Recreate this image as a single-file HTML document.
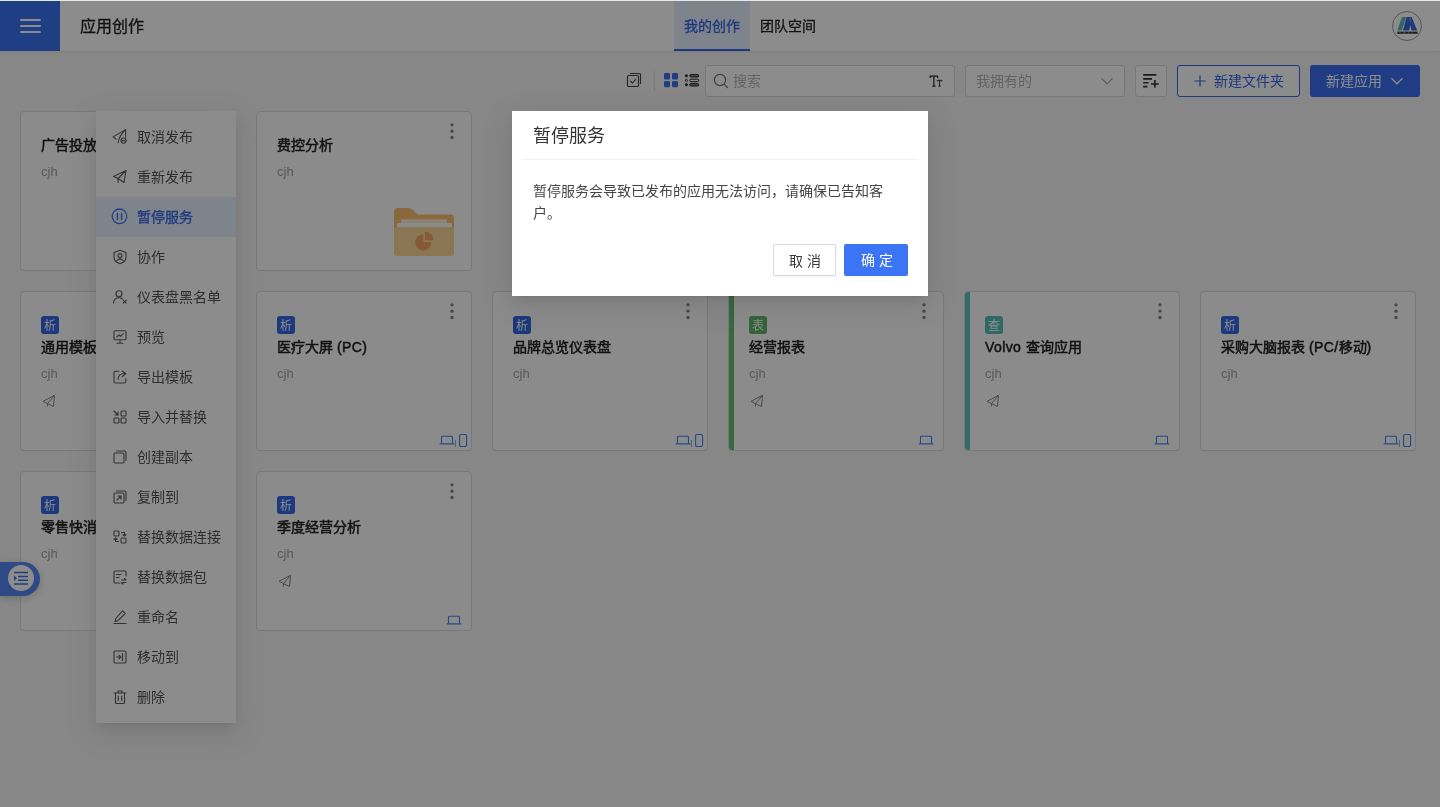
<!DOCTYPE html>
<html lang="zh-CN"><head><meta charset="utf-8">
<style>
*{box-sizing:border-box;margin:0;padding:0}
html,body{width:1440px;height:807px;overflow:hidden}
body{position:relative;background:#f6f6f7;font-family:"Liberation Sans",sans-serif;color:#1f1f1f}
#root{position:absolute;left:0;top:0;width:1440px;height:807px;will-change:transform}
.a{position:absolute}
svg{overflow:visible}
#hdr{left:0;top:0;width:1440px;height:51px;background:#fff;box-shadow:0 1px 3px rgba(0,0,0,.08)}
#ham{left:0;top:1px;width:60px;height:50px;background:#3b72f0}
#ham i{position:absolute;left:20px;width:21px;height:2px;background:#fff;border-radius:1px}
.ttl{left:80px;top:15px;font-size:16px;line-height:24px;font-weight:500;-webkit-text-stroke:0.3px #1f1f1f;color:#1f1f1f}
.tab{top:1px;height:50px;font-size:14px;line-height:50px;font-weight:500;-webkit-text-stroke:0.3px currentColor;text-align:center}
#tab1{left:674px;width:76px;background:#e8effd;color:#3467e6}
#tab1:after{content:"";position:absolute;left:0;right:0;bottom:0;height:2px;background:#3467e6}
#tab2{left:750px;width:76px;color:#1f1f1f}
#topline{left:0;top:0;width:1440px;height:1px;background:#e8e8e8;z-index:100}
.box{position:absolute;border:1px solid #d9d9d9;border-radius:3px;background:#fff}
.card{width:216px;height:160px;border:1px solid #dcdcdc;border-radius:4px;background:#fdfdfd}
.ct{position:absolute;font-size:14px;line-height:22px;font-weight:500;-webkit-text-stroke:0.5px #1f1f1f;color:#1f1f1f;white-space:nowrap}
.cu{position:absolute;font-size:13px;line-height:20px;color:#a3a3a3}
.ct b{font-weight:normal;letter-spacing:0.4px}
.tag{position:absolute;top:24px;width:18px;height:18px;border-radius:3px;color:#fff;font-size:12px;line-height:20px;text-align:center}
.dots{position:absolute;top:11px;width:4px;height:16px}
.dots i{position:absolute;left:0;width:3.4px;height:3.4px;border-radius:50%;background:#858585}
#menu{left:96px;top:111px;width:140px;height:612px;background:#fff;box-shadow:0 3px 6px -4px rgba(0,0,0,.12),0 6px 16px 0 rgba(0,0,0,.08),0 9px 28px 8px rgba(0,0,0,.05)}
.mi{position:absolute;left:0;width:140px;height:40px}
.mi span{position:absolute;left:41px;top:9px;font-size:14px;line-height:22px;color:#555;white-space:nowrap}
.mi.act{background:#e8effd}
.mi.act span{color:#3467e6;font-weight:500;-webkit-text-stroke:0.3px currentColor}
#float{left:0;top:562px;width:40px;height:34px;background:#5585f5;border-radius:0 17px 17px 0;box-shadow:0 2px 8px rgba(0,0,0,.18)}
#mask{left:0;top:0;width:1440px;height:807px;background:rgba(0,0,0,.45);z-index:50}
#dlg{left:512px;top:111px;width:416px;height:185px;background:#fff;z-index:60;box-shadow:0 3px 6px -4px rgba(0,0,0,.12),0 6px 16px 0 rgba(0,0,0,.08),0 9px 28px 8px rgba(0,0,0,.05)}
#dlg .t{position:absolute;left:21px;top:11px;font-size:18px;line-height:28px;color:#333}
#dlg .ln{position:absolute;left:10px;top:48px;width:396px;height:1px;background:#f0f0f0}
#dlg .b{position:absolute;left:21px;top:69px;width:360px;font-size:14px;line-height:22px;color:#454545}
.btn{position:absolute;top:133px;width:64px;height:32px;border-radius:2px;font-size:14px;line-height:30px;padding-top:1px;text-align:center;letter-spacing:4px;text-indent:5px;box-shadow:0 2px 0 rgba(0,0,0,.02)}

</style></head><body><div id="root">
<div id="topline" class="a"></div>
<div id="hdr" class="a"></div>
<div id="ham" class="a"><i style="top:18px"></i><i style="top:24px"></i><i style="top:30px"></i></div>
<div class="a ttl">应用创作</div>
<div id="tab1" class="a tab">我的创作</div>
<div id="tab2" class="a tab">团队空间</div>
<div class="a" style="left:1392px;top:11px;width:30px;height:30px;border-radius:50%;border:1px solid #9a9a9a;background:#fff;overflow:hidden">
<svg class="a" style="left:-1px;top:-1px" width="30" height="30" viewBox="1392 11 30 30">
<path d="M1397.3 30.5 H1401.8 L1406.2 17 H1402 Z" fill="#5bbdb5"/>
<path d="M1402.9 30.5 L1406.6 17 H1411.6 L1417.2 30.5 H1411.6 L1410.3 25.5 L1409.2 30.5 Z" fill="#3a66dc"/>
<path d="M1409.4 19 L1410.6 17.2 L1410.4 24 Z" fill="#fff" opacity=".5"/>
<rect x="1397.3" y="31.6" width="20.3" height="2.2" fill="#1a1a1a" opacity=".85"/>
<path d="M1400 31.6 V33.8 M1403.5 31.6 V33.8 M1405 31.6 V33.8 M1408.5 31.6 V33.8 M1412 31.6 V33.8" stroke="#fff" stroke-width=".5" opacity=".6"/>
</svg></div>
<!-- toolbar -->
<svg class="a" style="left:626px;top:72px" width="16" height="16" viewBox="0 0 16 16"><rect x="1.5" y="3.5" width="11" height="11" rx="1" fill="none" stroke="#444" stroke-width="1.1"/><path d="M4 1.5 H13.5 Q14.5 1.5 14.5 2.5 V12" fill="none" stroke="#444" stroke-width="1.1"/><path d="M4.3 9 L6.5 11 L10 7" fill="none" stroke="#444" stroke-width="1.1"/></svg>
<div class="a" style="left:654px;top:71px;width:1px;height:20px;background:#d9d9d9"></div>
<svg class="a" style="left:664px;top:73px" width="15" height="15" viewBox="0 0 15 15"><rect x="0" y="0" width="6" height="6.6" rx="1.3" fill="#3d72ee"/><rect x="8" y="0" width="6" height="6.6" rx="1.3" fill="#3d72ee"/><rect x="0" y="8" width="6" height="6.2" rx="1.3" fill="#3d72ee"/><rect x="8" y="8" width="6" height="6.2" rx="1.3" fill="#3d72ee"/></svg>
<svg class="a" style="left:684px;top:73px" width="16" height="15" viewBox="0 0 16 15"><circle cx="2.4" cy="2.8" r="1.2" fill="#333" stroke="#222" stroke-width="0.6"/><circle cx="2.4" cy="7.4" r="1.05" fill="#fff" stroke="#222" stroke-width="0.9"/><circle cx="2.4" cy="11.8" r="1.2" fill="#333" stroke="#222" stroke-width="0.6"/><rect x="5.7" y="1.6" width="9" height="2.4" rx="1.2" fill="#888" stroke="#222" stroke-width="1"/><rect x="5.7" y="6.2" width="9" height="2.4" rx="1.2" fill="#fff" stroke="#222" stroke-width="1"/><rect x="5.7" y="10.6" width="9" height="2.4" rx="1.2" fill="#888" stroke="#222" stroke-width="1"/></svg>
<div class="box" style="left:705px;top:65px;width:250px;height:32px"></div>
<svg class="a" style="left:713px;top:73px" width="16" height="16" viewBox="0 0 16 16"><circle cx="7" cy="7" r="5.6" fill="none" stroke="#777" stroke-width="1.2"/><path d="M11.2 11.2 L14.5 14.5" stroke="#777" stroke-width="1.2" stroke-linecap="round"/></svg>
<div class="a" style="left:733px;top:70px;font-size:14px;line-height:22px;color:#b5b5b5">搜索</div>
<svg class="a" style="left:928px;top:74px" width="16" height="14" viewBox="928 74 16 14"><path d="M930.2 78 V76.2 H937.6 V78 M933.9 76.2 V86.2 M932.3 86.2 H935.5" fill="none" stroke="#2a2a2a" stroke-width="1.2"/><path d="M937.4 81.5 V80.3 H941.8 V81.5 M939.6 80.3 V86.2 M938.6 86.2 H940.6" fill="none" stroke="#2a2a2a" stroke-width="1"/></svg>
<div class="box" style="left:965px;top:65px;width:160px;height:32px"></div>
<div class="a" style="left:976px;top:70px;font-size:14px;line-height:22px;color:#b5b5b5">我拥有的</div>
<svg class="a" style="left:1100px;top:76px" width="14" height="10" viewBox="0 0 14 10"><path d="M1.5 2.3 L7 7.8 L12.5 2.3" fill="none" stroke="#aaa" stroke-width="1.2"/></svg>
<div class="box" style="left:1135px;top:65px;width:32px;height:32px"></div>
<svg class="a" style="left:1142px;top:73px" width="18" height="16" viewBox="0 0 18 16"><path d="M1.2 1.9 H14.3 M1.2 5.9 H10 M1.2 9.7 H6.6 M1.2 13.6 H5.5 M12.9 7 V14.8 M9 11 H16.8" stroke="#333" stroke-width="1.6"/></svg>
<div class="box" style="left:1177px;top:65px;width:123px;height:32px;border-color:#3467e6"></div>
<svg class="a" style="left:1194px;top:75px" width="12" height="12" viewBox="0 0 12 12"><path d="M6 0.5 V11.5 M0.5 6 H11.5" stroke="#3467e6" stroke-width="1.2"/></svg>
<div class="a" style="left:1214px;top:70px;font-size:14px;line-height:22px;color:#3467e6">新建文件夹</div>
<div class="a" style="left:1310px;top:65px;width:110px;height:32px;background:#3a6ef0;border-radius:3px"></div>
<div class="a" style="left:1326px;top:70px;font-size:14px;line-height:22px;color:#fff">新建应用</div>
<svg class="a" style="left:1390px;top:76px" width="14" height="10" viewBox="0 0 14 10"><path d="M1.5 2.3 L7 7.8 L12.5 2.3" fill="none" stroke="#fff" stroke-width="1.3"/></svg>

<div class="a card" style="left:20px;top:111px">
<div class="ct" style="left:20px;top:22px">广告投放</div>
<div class="cu" style="left:20px;top:50px">cjh</div>
<svg class="a" style="left:192px;top:10px" width="6" height="18" viewBox="0 0 6 18"><circle cx="3" cy="2.8" r="1.65" fill="#858585"/><circle cx="3" cy="9.2" r="1.65" fill="#858585"/><circle cx="3" cy="15.5" r="1.65" fill="#858585"/></svg>
</div>
<div class="a card" style="left:256px;top:111px">
<div class="ct" style="left:20px;top:22px">费控分析</div>
<div class="cu" style="left:20px;top:50px">cjh</div>
<svg class="a" style="left:137px;top:96px" width="60" height="48" viewBox="0 0 60 48">
<path d="M0 4 Q0 0 4 0 H15 Q17 0 18.5 1.5 L23.5 6.5 H56 Q60 6.5 60 10.5 V44 Q60 48 56 48 H4 Q0 48 0 44 Z" fill="#fbbd6c"/>
<rect x="7" y="11.2" width="46" height="5" rx="1" fill="#fdebd6"/>
<rect x="3" y="15" width="55" height="5" rx="1" fill="#fdfbf8"/>
<path d="M0 19.3 H60 V44 Q60 48 56 48 H4 Q0 48 0 44 Z" fill="#fbd796"/>
<path d="M29.2 26.2 A8.1 8.1 0 1 0 37.3 34.3 H29.2 Z" fill="#f1a567"/>
<path d="M31 23.8 A8.4 8.4 0 0 1 39.4 32.2 H31 Z" fill="#f1a567"/>
</svg>
<svg class="a" style="left:192px;top:10px" width="6" height="18" viewBox="0 0 6 18"><circle cx="3" cy="2.8" r="1.65" fill="#858585"/><circle cx="3" cy="9.2" r="1.65" fill="#858585"/><circle cx="3" cy="15.5" r="1.65" fill="#858585"/></svg>
</div>
<div class="a card" style="left:20px;top:291px">
<div class="tag" style="left:20px;background:#3467e6">析</div>
<div class="ct" style="left:20px;top:44px">通用模板</div>
<div class="cu" style="left:20px;top:72px">cjh</div>
<svg class="a" style="left:21px;top:102px" width="14" height="14" viewBox="0 0 14 14"><path d="M12.5 1.3 L1 7.3 L5.5 9.6 L11.5 12.5 Z M12.5 1.3 L5.5 9.6 L5.5 12.5" fill="none" stroke="#8a8a8a" stroke-width="1" stroke-linejoin="round"/></svg>
<svg class="a" style="left:182px;top:142px" width="16" height="12" viewBox="0 0 16 12"><path d="M2.5 9.5 V3.2 Q2.5 2.3 3.4 2.3 H12.6 Q13.5 2.3 13.5 3.2 V9.5" fill="none" stroke="#3f86f5" stroke-width="1.1"/><path d="M1.2 9.9 H14.8" stroke="#3f86f5" stroke-width="1.3" stroke-linecap="round"/></svg>
<div class="a" style="left:198px;top:148px;width:1px;height:7px;background:#aaa"></div>
<svg class="a" style="left:201px;top:141px" width="10" height="15" viewBox="0 0 10 15"><rect x="1.6" y="1.5" width="7" height="12" rx="1.2" fill="none" stroke="#3f86f5" stroke-width="1.1"/></svg>
<svg class="a" style="left:192px;top:10px" width="6" height="18" viewBox="0 0 6 18"><circle cx="3" cy="2.8" r="1.65" fill="#858585"/><circle cx="3" cy="9.2" r="1.65" fill="#858585"/><circle cx="3" cy="15.5" r="1.65" fill="#858585"/></svg>
</div>
<div class="a card" style="left:256px;top:291px">
<div class="tag" style="left:20px;background:#3467e6">析</div>
<div class="ct" style="left:20px;top:44px">医疗大屏 <b>(PC)</b></div>
<div class="cu" style="left:20px;top:72px">cjh</div>
<svg class="a" style="left:182px;top:142px" width="16" height="12" viewBox="0 0 16 12"><path d="M2.5 9.5 V3.2 Q2.5 2.3 3.4 2.3 H12.6 Q13.5 2.3 13.5 3.2 V9.5" fill="none" stroke="#3f86f5" stroke-width="1.1"/><path d="M1.2 9.9 H14.8" stroke="#3f86f5" stroke-width="1.3" stroke-linecap="round"/></svg>
<div class="a" style="left:198px;top:148px;width:1px;height:7px;background:#aaa"></div>
<svg class="a" style="left:201px;top:141px" width="10" height="15" viewBox="0 0 10 15"><rect x="1.6" y="1.5" width="7" height="12" rx="1.2" fill="none" stroke="#3f86f5" stroke-width="1.1"/></svg>
<svg class="a" style="left:192px;top:10px" width="6" height="18" viewBox="0 0 6 18"><circle cx="3" cy="2.8" r="1.65" fill="#858585"/><circle cx="3" cy="9.2" r="1.65" fill="#858585"/><circle cx="3" cy="15.5" r="1.65" fill="#858585"/></svg>
</div>
<div class="a card" style="left:492px;top:291px">
<div class="tag" style="left:20px;background:#3467e6">析</div>
<div class="ct" style="left:20px;top:44px">品牌总览仪表盘</div>
<div class="cu" style="left:20px;top:72px">cjh</div>
<svg class="a" style="left:182px;top:142px" width="16" height="12" viewBox="0 0 16 12"><path d="M2.5 9.5 V3.2 Q2.5 2.3 3.4 2.3 H12.6 Q13.5 2.3 13.5 3.2 V9.5" fill="none" stroke="#3f86f5" stroke-width="1.1"/><path d="M1.2 9.9 H14.8" stroke="#3f86f5" stroke-width="1.3" stroke-linecap="round"/></svg>
<div class="a" style="left:198px;top:148px;width:1px;height:7px;background:#aaa"></div>
<svg class="a" style="left:201px;top:141px" width="10" height="15" viewBox="0 0 10 15"><rect x="1.6" y="1.5" width="7" height="12" rx="1.2" fill="none" stroke="#3f86f5" stroke-width="1.1"/></svg>
<svg class="a" style="left:192px;top:10px" width="6" height="18" viewBox="0 0 6 18"><circle cx="3" cy="2.8" r="1.65" fill="#858585"/><circle cx="3" cy="9.2" r="1.65" fill="#858585"/><circle cx="3" cy="15.5" r="1.65" fill="#858585"/></svg>
</div>
<div class="a card" style="left:728px;top:291px">
<div class="a" style="left:0;top:0;width:5px;height:158px;background:#68bc72;border-radius:3px 0 0 3px"></div>
<div class="tag" style="left:20px;background:#62b56c">表</div>
<div class="ct" style="left:20px;top:44px">经营报表</div>
<div class="cu" style="left:20px;top:72px">cjh</div>
<svg class="a" style="left:21px;top:102px" width="14" height="14" viewBox="0 0 14 14"><path d="M12.5 1.3 L1 7.3 L5.5 9.6 L11.5 12.5 Z M12.5 1.3 L5.5 9.6 L5.5 12.5" fill="none" stroke="#8a8a8a" stroke-width="1" stroke-linejoin="round"/></svg>
<svg class="a" style="left:189px;top:142px" width="16" height="12" viewBox="0 0 16 12"><path d="M2.5 9.5 V3.2 Q2.5 2.3 3.4 2.3 H12.6 Q13.5 2.3 13.5 3.2 V9.5" fill="none" stroke="#3f86f5" stroke-width="1.1"/><path d="M1.2 9.9 H14.8" stroke="#3f86f5" stroke-width="1.3" stroke-linecap="round"/></svg>
<svg class="a" style="left:192px;top:10px" width="6" height="18" viewBox="0 0 6 18"><circle cx="3" cy="2.8" r="1.65" fill="#858585"/><circle cx="3" cy="9.2" r="1.65" fill="#858585"/><circle cx="3" cy="15.5" r="1.65" fill="#858585"/></svg>
</div>
<div class="a card" style="left:964px;top:291px">
<div class="a" style="left:0;top:0;width:5px;height:158px;background:#5cc7c3;border-radius:3px 0 0 3px"></div>
<div class="tag" style="left:20px;background:#55bfbb">查</div>
<div class="ct" style="left:20px;top:44px"><b>Volvo </b>查询应用</div>
<div class="cu" style="left:20px;top:72px">cjh</div>
<svg class="a" style="left:21px;top:102px" width="14" height="14" viewBox="0 0 14 14"><path d="M12.5 1.3 L1 7.3 L5.5 9.6 L11.5 12.5 Z M12.5 1.3 L5.5 9.6 L5.5 12.5" fill="none" stroke="#8a8a8a" stroke-width="1" stroke-linejoin="round"/></svg>
<svg class="a" style="left:189px;top:142px" width="16" height="12" viewBox="0 0 16 12"><path d="M2.5 9.5 V3.2 Q2.5 2.3 3.4 2.3 H12.6 Q13.5 2.3 13.5 3.2 V9.5" fill="none" stroke="#3f86f5" stroke-width="1.1"/><path d="M1.2 9.9 H14.8" stroke="#3f86f5" stroke-width="1.3" stroke-linecap="round"/></svg>
<svg class="a" style="left:192px;top:10px" width="6" height="18" viewBox="0 0 6 18"><circle cx="3" cy="2.8" r="1.65" fill="#858585"/><circle cx="3" cy="9.2" r="1.65" fill="#858585"/><circle cx="3" cy="15.5" r="1.65" fill="#858585"/></svg>
</div>
<div class="a card" style="left:1200px;top:291px">
<div class="tag" style="left:20px;background:#3467e6">析</div>
<div class="ct" style="left:20px;top:44px">采购大脑报表 <b>(PC/</b>移动<b>)</b></div>
<div class="cu" style="left:20px;top:72px">cjh</div>
<svg class="a" style="left:182px;top:142px" width="16" height="12" viewBox="0 0 16 12"><path d="M2.5 9.5 V3.2 Q2.5 2.3 3.4 2.3 H12.6 Q13.5 2.3 13.5 3.2 V9.5" fill="none" stroke="#3f86f5" stroke-width="1.1"/><path d="M1.2 9.9 H14.8" stroke="#3f86f5" stroke-width="1.3" stroke-linecap="round"/></svg>
<div class="a" style="left:198px;top:148px;width:1px;height:7px;background:#aaa"></div>
<svg class="a" style="left:201px;top:141px" width="10" height="15" viewBox="0 0 10 15"><rect x="1.6" y="1.5" width="7" height="12" rx="1.2" fill="none" stroke="#3f86f5" stroke-width="1.1"/></svg>
<svg class="a" style="left:192px;top:10px" width="6" height="18" viewBox="0 0 6 18"><circle cx="3" cy="2.8" r="1.65" fill="#858585"/><circle cx="3" cy="9.2" r="1.65" fill="#858585"/><circle cx="3" cy="15.5" r="1.65" fill="#858585"/></svg>
</div>
<div class="a card" style="left:20px;top:471px">
<div class="tag" style="left:20px;background:#3467e6">析</div>
<div class="ct" style="left:20px;top:44px">零售快消</div>
<div class="cu" style="left:20px;top:72px">cjh</div>
<svg class="a" style="left:182px;top:142px" width="16" height="12" viewBox="0 0 16 12"><path d="M2.5 9.5 V3.2 Q2.5 2.3 3.4 2.3 H12.6 Q13.5 2.3 13.5 3.2 V9.5" fill="none" stroke="#3f86f5" stroke-width="1.1"/><path d="M1.2 9.9 H14.8" stroke="#3f86f5" stroke-width="1.3" stroke-linecap="round"/></svg>
<div class="a" style="left:198px;top:148px;width:1px;height:7px;background:#aaa"></div>
<svg class="a" style="left:201px;top:141px" width="10" height="15" viewBox="0 0 10 15"><rect x="1.6" y="1.5" width="7" height="12" rx="1.2" fill="none" stroke="#3f86f5" stroke-width="1.1"/></svg>
<svg class="a" style="left:192px;top:10px" width="6" height="18" viewBox="0 0 6 18"><circle cx="3" cy="2.8" r="1.65" fill="#858585"/><circle cx="3" cy="9.2" r="1.65" fill="#858585"/><circle cx="3" cy="15.5" r="1.65" fill="#858585"/></svg>
</div>
<div class="a card" style="left:256px;top:471px">
<div class="tag" style="left:20px;background:#3467e6">析</div>
<div class="ct" style="left:20px;top:44px">季度经营分析</div>
<div class="cu" style="left:20px;top:72px">cjh</div>
<svg class="a" style="left:21px;top:102px" width="14" height="14" viewBox="0 0 14 14"><path d="M12.5 1.3 L1 7.3 L5.5 9.6 L11.5 12.5 Z M12.5 1.3 L5.5 9.6 L5.5 12.5" fill="none" stroke="#8a8a8a" stroke-width="1" stroke-linejoin="round"/></svg>
<svg class="a" style="left:189px;top:142px" width="16" height="12" viewBox="0 0 16 12"><path d="M2.5 9.5 V3.2 Q2.5 2.3 3.4 2.3 H12.6 Q13.5 2.3 13.5 3.2 V9.5" fill="none" stroke="#3f86f5" stroke-width="1.1"/><path d="M1.2 9.9 H14.8" stroke="#3f86f5" stroke-width="1.3" stroke-linecap="round"/></svg>
<svg class="a" style="left:192px;top:10px" width="6" height="18" viewBox="0 0 6 18"><circle cx="3" cy="2.8" r="1.65" fill="#858585"/><circle cx="3" cy="9.2" r="1.65" fill="#858585"/><circle cx="3" cy="15.5" r="1.65" fill="#858585"/></svg>
</div>
<div id="menu" class="a">
<div class="mi" style="top:6px"><svg class="a" style="left:16px;top:12px" width="16" height="16" viewBox="0 0 16 16"><path d="M4 10 L1.1 7.9 L13.6 0.6 V8.3" stroke="#5e5e5e" stroke-width="1.1" fill="none" stroke-linecap="round" stroke-linejoin="round"/><path d="M13.6 0.6 Q7 7 6.1 13.7" stroke="#5e5e5e" stroke-width="1.1" fill="none" stroke-linecap="round" stroke-linejoin="round"/><circle cx="11.6" cy="11.6" r="2.6" stroke="#5e5e5e" stroke-width="1.1" fill="none" stroke-linecap="round" stroke-linejoin="round"/><path d="M10.1 11.6 H13.1" stroke="#5e5e5e" stroke-width="1.1" fill="none" stroke-linecap="round" stroke-linejoin="round"/></svg><span>取消发布</span></div>
<div class="mi" style="top:46px"><svg class="a" style="left:16px;top:12px" width="16" height="16" viewBox="0 0 16 16"><path d="M14 1.5 L1.5 7.5 L6 9.5 L12 13.5 Z M14 1.5 L6 9.5 V13.5" stroke="#5e5e5e" stroke-width="1.1" fill="none" stroke-linecap="round" stroke-linejoin="round"/></svg><span>重新发布</span></div>
<div class="mi act" style="top:86px"><svg class="a" style="left:16px;top:12px" width="16" height="16" viewBox="0 0 16 16"><circle cx="7.5" cy="7.3" r="7.3" stroke="#4574ea" stroke-width="1.3" fill="none"/><path d="M5.4 4.4 V10.4 M9.6 4.4 V10.4" stroke="#4574ea" stroke-width="1.5" stroke-linecap="round"/></svg><span>暂停服务</span></div>
<div class="mi" style="top:126px"><svg class="a" style="left:16px;top:12px" width="16" height="16" viewBox="0 0 16 16"><path d="M8 1.2 L14 3.5 V8.5 Q14 12.5 8 14.8 Q2 12.5 2 8.5 V3.5 Z" stroke="#5e5e5e" stroke-width="1.1" fill="none" stroke-linecap="round" stroke-linejoin="round"/><circle cx="8" cy="6.6" r="2" stroke="#5e5e5e" stroke-width="1.1" fill="none" stroke-linecap="round" stroke-linejoin="round"/><path d="M4.6 12 Q8 7.8 11.4 12" stroke="#5e5e5e" stroke-width="1.1" fill="none" stroke-linecap="round" stroke-linejoin="round"/></svg><span>协作</span></div>
<div class="mi" style="top:166px"><svg class="a" style="left:16px;top:12px" width="16" height="16" viewBox="0 0 16 16"><circle cx="7" cy="4.8" r="3" stroke="#5e5e5e" stroke-width="1.1" fill="none" stroke-linecap="round" stroke-linejoin="round"/><path d="M1.5 14 Q2 8.8 7 8.8 Q9 8.8 10.3 9.8" stroke="#5e5e5e" stroke-width="1.1" fill="none" stroke-linecap="round" stroke-linejoin="round"/><path d="M11.2 11.2 L14.2 14.2 M14.2 11.2 L11.2 14.2" stroke="#5e5e5e" stroke-width="1.1" fill="none" stroke-linecap="round" stroke-linejoin="round"/></svg><span>仪表盘黑名单</span></div>
<div class="mi" style="top:206px"><svg class="a" style="left:16px;top:12px" width="16" height="16" viewBox="0 0 16 16"><rect x="2" y="1.8" width="12" height="9" rx="1" stroke="#5e5e5e" stroke-width="1.1" fill="none" stroke-linecap="round" stroke-linejoin="round"/><path d="M4.8 8 L7 5.8 L8.6 7.4 L11.2 4.6" stroke="#5e5e5e" stroke-width="1.1" fill="none" stroke-linecap="round" stroke-linejoin="round"/><path d="M8 10.8 V14.2 M5 14.2 H11" stroke="#5e5e5e" stroke-width="1.1" fill="none" stroke-linecap="round" stroke-linejoin="round"/></svg><span>预览</span></div>
<div class="mi" style="top:246px"><svg class="a" style="left:16px;top:12px" width="16" height="16" viewBox="0 0 16 16"><path d="M7 2.2 H3.5 Q2 2.2 2 3.7 V12.5 Q2 14 3.5 14 H12.3 Q13.8 14 13.8 12.5 V9.5" stroke="#5e5e5e" stroke-width="1.1" fill="none" stroke-linecap="round" stroke-linejoin="round"/><path d="M10.2 2 L13.8 4.8 L10.2 7.6 M13.8 4.8 H11 Q6.5 4.8 6 10.5" stroke="#5e5e5e" stroke-width="1.1" fill="none" stroke-linecap="round" stroke-linejoin="round"/></svg><span>导出模板</span></div>
<div class="mi" style="top:286px"><svg class="a" style="left:16px;top:12px" width="16" height="16" viewBox="0 0 16 16"><path d="M2 2 L6 6 M6 3 V6 H3" stroke="#5e5e5e" stroke-width="1.1" fill="none" stroke-linecap="round" stroke-linejoin="round"/><rect x="9" y="2" width="5" height="5" rx="1" stroke="#5e5e5e" stroke-width="1.1" fill="none" stroke-linecap="round" stroke-linejoin="round"/><rect x="2" y="9" width="5" height="5" rx="1" stroke="#5e5e5e" stroke-width="1.1" fill="none" stroke-linecap="round" stroke-linejoin="round"/><rect x="9" y="9" width="5" height="5" rx="1" stroke="#5e5e5e" stroke-width="1.1" fill="none" stroke-linecap="round" stroke-linejoin="round"/></svg><span>导入并替换</span></div>
<div class="mi" style="top:326px"><svg class="a" style="left:16px;top:12px" width="16" height="16" viewBox="0 0 16 16"><rect x="2" y="4" width="10" height="10" rx="1.2" stroke="#5e5e5e" stroke-width="1.1" fill="none" stroke-linecap="round" stroke-linejoin="round"/><path d="M4.5 2 H12.5 Q14 2 14 3.5 V11.5" stroke="#5e5e5e" stroke-width="1.1" fill="none" stroke-linecap="round" stroke-linejoin="round"/></svg><span>创建副本</span></div>
<div class="mi" style="top:366px"><svg class="a" style="left:16px;top:12px" width="16" height="16" viewBox="0 0 16 16"><rect x="2" y="4" width="10" height="10" rx="1.2" stroke="#5e5e5e" stroke-width="1.1" fill="none" stroke-linecap="round" stroke-linejoin="round"/><path d="M4.5 2 H12.5 Q14 2 14 3.5 V11.5" stroke="#5e5e5e" stroke-width="1.1" fill="none" stroke-linecap="round" stroke-linejoin="round"/><path d="M5 11 L9 7 M6 7 H9 V10" stroke="#5e5e5e" stroke-width="1.1" fill="none" stroke-linecap="round" stroke-linejoin="round"/></svg><span>复制到</span></div>
<div class="mi" style="top:406px"><svg class="a" style="left:16px;top:12px" width="16" height="16" viewBox="0 0 16 16"><rect x="2" y="2" width="5" height="5" rx="1" stroke="#5e5e5e" stroke-width="1.1" fill="none" stroke-linecap="round" stroke-linejoin="round"/><rect x="9" y="9" width="5" height="5" rx="1" stroke="#5e5e5e" stroke-width="1.1" fill="none" stroke-linecap="round" stroke-linejoin="round"/><path d="M9.5 3.5 H12.5 V6.5 M11 5.5 L12.5 7 L14 5.5" stroke="#5e5e5e" stroke-width="1.1" fill="none" stroke-linecap="round" stroke-linejoin="round"/><path d="M6.5 12.5 H3.5 V9.5 M2 10.5 L3.5 9 L5 10.5" stroke="#5e5e5e" stroke-width="1.1" fill="none" stroke-linecap="round" stroke-linejoin="round"/></svg><span>替换数据连接</span></div>
<div class="mi" style="top:446px"><svg class="a" style="left:16px;top:12px" width="16" height="16" viewBox="0 0 16 16"><path d="M14 7 V3 Q14 2 13 2 H3 Q2 2 2 3 V13 Q2 14 3 14 H8" stroke="#5e5e5e" stroke-width="1.1" fill="none" stroke-linecap="round" stroke-linejoin="round"/><path d="M4.5 5.5 H9 M4.5 8.5 H7 M9.5 11 H14 L12.5 9.5 M14 13.5 H9.5 L11 15" stroke="#5e5e5e" stroke-width="1.1" fill="none" stroke-linecap="round" stroke-linejoin="round"/></svg><span>替换数据包</span></div>
<div class="mi" style="top:486px"><svg class="a" style="left:16px;top:12px" width="16" height="16" viewBox="0 0 16 16"><path d="M10.5 1.8 L13.2 4.5 L6 11.7 L3 12.5 L3.8 9.5 Z" stroke="#5e5e5e" stroke-width="1.1" fill="none" stroke-linecap="round" stroke-linejoin="round"/><path d="M2 14.5 H14" stroke="#5e5e5e" stroke-width="1.1" fill="none" stroke-linecap="round" stroke-linejoin="round"/></svg><span>重命名</span></div>
<div class="mi" style="top:526px"><svg class="a" style="left:16px;top:12px" width="16" height="16" viewBox="0 0 16 16"><rect x="2" y="2" width="12" height="12" rx="1.2" stroke="#5e5e5e" stroke-width="1.1" fill="none" stroke-linecap="round" stroke-linejoin="round"/><path d="M10.5 4.5 V11.5 M4.5 8 H8.8 M7 6.2 L8.8 8 L7 9.8" stroke="#5e5e5e" stroke-width="1.1" fill="none" stroke-linecap="round" stroke-linejoin="round"/></svg><span>移动到</span></div>
<div class="mi" style="top:566px"><svg class="a" style="left:16px;top:12px" width="16" height="16" viewBox="0 0 16 16"><path d="M2 4 H14 M6 4 V2 H10 V4" stroke="#5e5e5e" stroke-width="1.1" fill="none" stroke-linecap="round" stroke-linejoin="round"/><path d="M3.5 4 V13.5 Q3.5 14.5 4.5 14.5 H11.5 Q12.5 14.5 12.5 13.5 V4" stroke="#5e5e5e" stroke-width="1.1" fill="none" stroke-linecap="round" stroke-linejoin="round"/><path d="M6.3 7 V11.5 M9.7 7 V11.5" stroke="#5e5e5e" stroke-width="1.1" fill="none" stroke-linecap="round" stroke-linejoin="round"/></svg><span>删除</span></div>
</div>
<div id="float" class="a"><div class="a" style="left:8px;top:3px;width:26px;height:26px;border-radius:50%;background:#fff"></div>
<svg class="a" style="left:13px;top:9px" width="16" height="16" viewBox="0 0 16 16"><path d="M1 1.5 H15 M5 5.5 H15 M5 9.2 H15 M1 13 H15" stroke="#3a6ef0" stroke-width="1.4"/><path d="M1 4.5 L4 7.3 L1 10.1 Z" fill="#3a6ef0"/></svg></div>

<div id="mask" class="a"></div>
<div id="dlg" class="a">
<div class="t">暂停服务</div>
<div class="ln"></div>
<div class="b">暂停服务会导致已发布的应用无法访问，请确保已告知客户。</div>
<div class="btn" style="left:260.5px;width:63px;border:1px solid #d9d9d9;color:#3a3a3a;background:#fff">取消</div>
<div class="btn" style="left:332px;background:#3b74f4;color:#fff">确定</div>
</div>

</div></body></html>
